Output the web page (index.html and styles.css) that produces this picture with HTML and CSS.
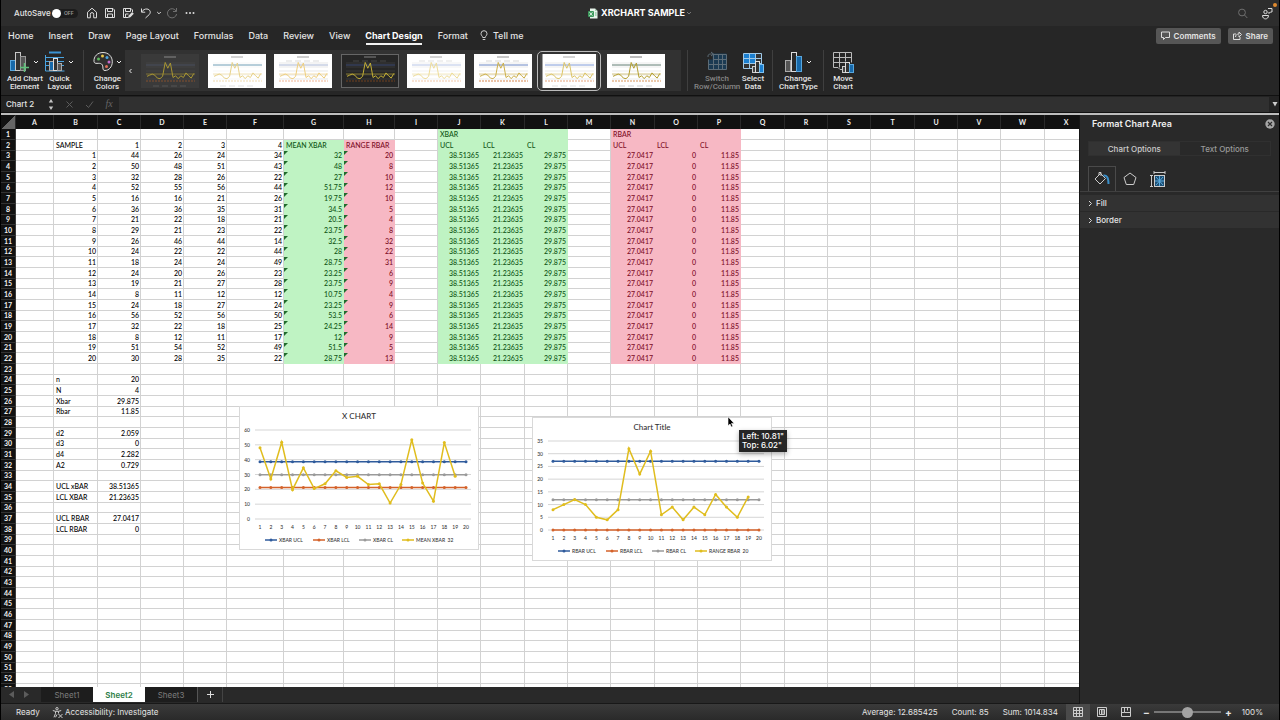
FILE: index.html
```html
<!DOCTYPE html>
<html lang="en">
<head>
<meta charset="utf-8">
<title>XRCHART SAMPLE</title>
<link rel="stylesheet" href="styles.css">
</head>
<body>
<div class="app">
  <header class="titlebar">
    <div class="quick">
      <label class="autosave">AutoSave
        <input type="checkbox" class="switch" role="switch" aria-label="AutoSave">
        <span class="off">OFF</span>
      </label>
      <button class="icon-btn" aria-label="Home"><svg width="12" height="12" viewBox="0 0 12 12"><path d="M1.5 5.2 6 1.2l4.500 4v5.600H7.700V7.300a1.700 1.700 0 0 0-3.400 0v3.500H1.500z"/></svg></button>
      <button class="icon-btn" aria-label="Save"><svg width="12" height="12" viewBox="0 0 12 12"><path d="M1.500 1.500h7.500l1.500 1.500v7.500h-9zM3.500 1.500v3h5v-3M3.500 10.500v-3.500h5v3.500"/></svg></button>
      <button class="icon-btn" aria-label="Save as"><svg width="12" height="12" viewBox="0 0 12 12"><path d="M6 10.500H1.500v-9H9l1.500 1.500v2M3.500 1.500v3h5v-3M3.500 10.500v-3.500h3"/><path d="m6 11 .7-2.500 3.400-3.400 1.700 1.700-3.400 3.400z" class="solid"/></svg></button>
      <button class="icon-btn" aria-label="Undo"><svg width="12" height="12" viewBox="0 0 12 12"><path d="M1.500 1.500v3.700h3.700M1.700 5C3 2.800 5 1.800 7 2c3 .3 4.300 3.300 2.300 5.500L5.500 11"/></svg></button>
      <button class="icon-btn tiny" aria-label="Undo options"><svg width="6" height="6" viewBox="0 0 6 6"><path d="m1.200 2 1.800 1.800L4.800 2"/></svg></button>
      <button class="icon-btn dim" aria-label="Redo" disabled><svg width="12" height="12" viewBox="0 0 12 12"><path d="M10.500 1v3.500H7M10.200 4.300A4.600 4.600 0 1 0 10.600 7"/></svg></button>
      <button class="icon-btn" aria-label="More"><svg width="12" height="12" viewBox="0 0 12 12"><g class="solid"><circle cx="2.500" cy="6" r="1"/><circle cx="6" cy="6" r="1"/><circle cx="9.500" cy="6" r="1"/></g></svg></button>
    </div>
    <h1 class="doc-title">
      <svg width="10" height="11" viewBox="0 0 10 11"><path d="M2 .5h5L9.500 3v7.500H2z" fill="#e9f5ec"/><path d="M7 .5V3h2.500z" fill="#a8cfb4"/><rect y="3" width="6" height="6" rx="1" fill="#3d9a5d"/><path d="m1.600 4.300 2.800 3.400M4.400 4.300 1.600 7.700" stroke="#fff" stroke-width=".8"/><path d="M7 5h1.600M7 7h1.600" stroke="#6bb585"/></svg>
      XRCHART SAMPLE
      <svg class="title-arrow" width="6" height="6" viewBox="0 0 6 6"><path d="m1 2 2 2 2-2"/></svg>
    </h1>
    <div class="title-right">
      <button class="icon-btn dim" aria-label="Search"><svg width="12" height="12" viewBox="0 0 12 12"><circle cx="5" cy="5.500" r="3.400"/><path d="m7.500 8 2.800 3"/></svg></button>
      <button class="icon-btn" aria-label="Presence"><svg width="12" height="14" viewBox="0 0 12 14"><circle cx="4.500" cy="6" r="1.700"/><path d="M1.500 9.500h6c0 4.500-6 4.500-6 0zM7 2.500h4v3.500H9.500L8 7.500V6"/></svg></button>
      <span class="mic-dot"></span>
    </div>
  </header>

  <nav class="tabs">
    <button>Home</button><button>Insert</button><button>Draw</button><button>Page Layout</button><button>Formulas</button><button>Data</button><button>Review</button><button>View</button><button class="active">Chart Design</button><button>Format</button>
    <button class="tell"><svg width="8" height="11" viewBox="0 0 8 11"><path d="M2.700 7.500C2.700 6 1 5.700 1 3.700a3 3 0 0 1 6 0c0 2-1.700 2.300-1.700 3.800zM2.700 9.500h2.600"/></svg>Tell me</button>
    <span class="grow"></span>
    <button class="pill"><svg width="9" height="9" viewBox="0 0 9 9"><path d="M.5 1h8v5.500h-4l-2 2v-2h-2z"/></svg>Comments</button>
    <button class="pill"><svg width="9" height="9" viewBox="0 0 9 9"><path d="M3 3H.5v5.500h6.500V6M2.500 6C2.500 4 4 3 6 3V1l2.500 2.500L6 6V4.300"/></svg>Share</button>
  </nav>

  <div class="ribbon">
    <button class="tool"><span class="tool-icon"><svg width="20" height="22" viewBox="0 0 20 22"><rect x=".5" y="9.500" width="5" height="10" fill="#1769aa" stroke="#58a6dd"/><rect x="5.500" y="1.500" width="5" height="18" fill="#333" stroke="#c8c8c8"/><rect x="10.500" y="5.500" width="5" height="14" fill="#555" stroke="#999"/><path d="M14.500 12v9M10 16.500h9" stroke="#5fc07a" stroke-width="1.500"/></svg><svg class="caret" width="6" height="6" viewBox="0 0 6 6"><path d="m1 2 2 2 2-2"/></svg></span>Add Chart<br>Element</button>
    <button class="tool"><span class="tool-icon"><svg width="20" height="22" viewBox="0 0 20 22"><path d="M4 1.500h12" stroke="#3a94d4" stroke-width="2"/><path d="M.5 4v16h19M1 6.500h18M1 10.500h18M1 14.500h18" fill="none" stroke="#4aa3df"/><rect x="4.500" y="10.500" width="4" height="9" fill="#1769aa" stroke="#aaa"/><rect x="8.500" y="7.500" width="4" height="12" fill="#333" stroke="#ddd"/><rect x="12.500" y="12.500" width="4" height="7" fill="#555" stroke="#aaa"/></svg><svg class="caret" width="6" height="6" viewBox="0 0 6 6"><path d="m1 2 2 2 2-2"/></svg></span>Quick<br>Layout</button>
    <span class="sep"></span>
    <button class="tool"><span class="tool-icon"><svg width="20" height="22" viewBox="0 0 20 22"><path d="M10 1.500c5.500 0 9.300 4 9.300 9.300 0 5-3.300 8.700-7.300 8.700-3.600 0-.8-4.500-3.500-6.500-2.500-1.800-7 1-7.500-2.500C.5 5.500 4.500 1.500 10 1.500z" fill="#303030" stroke="#ddd"/><circle cx="5.500" cy="8" r="1.500" fill="#5cb85c"/><circle cx="9.500" cy="5" r="1.500" fill="#e8c648"/><circle cx="14" cy="6.500" r="1.500" fill="#4aa3df"/><circle cx="16" cy="11" r="1.500" fill="#c76bd1"/><circle cx="13.500" cy="15.500" r="1.500" fill="#e0705a"/></svg><svg class="caret" width="6" height="6" viewBox="0 0 6 6"><path d="m1 2 2 2 2-2"/></svg></span>Change<br>Colors</button>
    <div class="gallery">
      <button class="gallery-prev" aria-label="Previous styles"><svg width="5" height="8" viewBox="0 0 5 8"><path d="M3.500 2 1.500 4l2 2"/></svg></button>
      <div class="thumbs" id="thumbs"></div>
    </div>
    <span class="sep"></span>
    <button class="tool wide" disabled><span class="tool-icon"><svg width="20" height="22" viewBox="0 0 20 22"><path d="M5.500 2.500v6h-4v10h18v-16h-11z" fill="#1b3a52"/><path d="M6.500 3.500h13v15h-18v-10M1.500 13.500h18M6.500 8.500h13M6.500 3v15M11.500 3.500v15M15.500 3.500v15M1 6c0-3 1-3 5-3M4 1l2.500 2L4 5" fill="none" stroke="#5d6d78"/></svg></span>Switch<br>Row/Column</button>
    <button class="tool narrow"><span class="tool-icon"><svg width="22" height="22" viewBox="0 0 22 22"><rect x="1.500" y="2.500" width="18" height="15" fill="#333"/><rect x="1.500" y="2.500" width="12" height="10" fill="#1b7fd0"/><path d="M1.500 2.500h18v15h-18zM1.500 7.500h18M1.500 12.500h18M7.500 2.500v15M13.500 2.500v15" fill="none" stroke="#9fc9e8"/><rect x="10.500" y="15.500" width="4" height="6" fill="#444" stroke="#ccc"/><rect x="13.500" y="10.500" width="4" height="11" fill="#333" stroke="#ddd"/><rect x="17.500" y="13.500" width="4" height="8" fill="#1b7fd0" stroke="#7fc0ee"/></svg></span>Select<br>Data</button>
    <span class="sep"></span>
    <button class="tool medium"><span class="tool-icon"><svg width="18" height="22" viewBox="0 0 18 22"><rect x=".5" y="9.500" width="5" height="11" fill="#555" stroke="#aaa"/><rect x="6.500" y="1.500" width="5" height="19" fill="#2a2a2a" stroke="#ddd"/><rect x="11.500" y="5.500" width="5" height="15" fill="#1769aa" stroke="#58a6dd"/></svg><svg class="caret" width="6" height="6" viewBox="0 0 6 6"><path d="m1 2 2 2 2-2"/></svg></span>Change<br>Chart Type</button>
    <span class="sep"></span>
    <button class="tool narrow"><span class="tool-icon"><svg width="22" height="22" viewBox="0 0 22 22"><path d="M10 18.500H8l-2 -2H1.500v-15h18v10M1.500 6.500h18M1.500 11.500h12M7.500 1.500v15M13.500 1.500v9" fill="none" stroke="#bbb"/><rect x="10.500" y="15.500" width="4" height="6" fill="#444" stroke="#ccc"/><rect x="13.500" y="11.500" width="4" height="10" fill="#333" stroke="#ddd"/><rect x="17.500" y="13.500" width="4" height="8" fill="#1769aa" stroke="#58a6dd"/></svg></span>Move<br>Chart</button>
  </div>

  <div class="formula-bar">
    <input class="name-box" value="Chart 2" aria-label="Name box">
    <span class="stepper"><svg width="6" height="13" viewBox="0 0 6 13"><path d="M3 1 5.200 4.500H.8zM3 12 .8 8.500h4.400z"/></svg></span>
    <button class="fx-btn" aria-label="Cancel" disabled><svg width="9" height="9" viewBox="0 0 9 9"><path d="m1.500 1.500 6 6M7.500 1.500l-6 6"/></svg></button>
    <button class="fx-btn" aria-label="Enter" disabled><svg width="9" height="9" viewBox="0 0 9 9"><path d="m1 5 2.500 2.500L8 1.500"/></svg></button>
    <button class="fx-btn fx" disabled>fx</button>
    <input class="formula" aria-label="Formula">
    <span class="expand"><svg width="6" height="6" viewBox="0 0 6 6"><path d="M.5 1h5L3 5.500z"/></svg></span>
  </div>

  <main class="work">
    <section class="book">
      <div class="sheet">
        <table class="grid" id="grid"></table>
        <div class="chart chart-x" id="chart-x"></div>
        <div class="chart chart-r" id="chart-r"></div>
        <svg class="pointer" width="8" height="12" viewBox="0 0 8 12"><path d="M1 .8v9l2-1.800 1.300 3 1.500-.7-1.300-2.900h2.700z" fill="#000" stroke="#fff" stroke-width=".6"/></svg>
        <div class="drag-tip">Left: 10.81"<br>Top: 6.02"</div>
      </div>
      <div class="sheet-tabs">
        <button class="arrow" aria-label="Previous sheet"><svg width="5" height="7" viewBox="0 0 5 7"><path d="M5 0v7L0 3.500z"/></svg></button>
        <button class="arrow" aria-label="Next sheet"><svg width="5" height="7" viewBox="0 0 5 7"><path d="M0 0v7l5-3.500z"/></svg></button>
        <button class="sheet-tab">Sheet1</button>
        <button class="sheet-tab active">Sheet2</button>
        <button class="sheet-tab">Sheet3</button>
        <button class="add" aria-label="Add sheet"><svg width="9" height="9" viewBox="0 0 9 9"><path d="M4.500 1v7M1 4.500h7"/></svg></button>
      </div>
    </section>

    <aside class="pane">
      <div class="pane-head"><h2>Format Chart Area</h2><button class="close" aria-label="Close"><svg width="10" height="10" viewBox="0 0 10 10"><circle cx="5" cy="5" r="4.700" fill="#a5a5a5"/><path d="m3 3 4 4M7 3 3 7" stroke="#2b2b2b" stroke-width="1.200"/></svg></button></div>
      <div class="segments"><button class="active">Chart Options</button><button>Text Options</button></div>
      <div class="pane-icons">
        <button class="active" aria-label="Fill and line"><svg width="18" height="18" viewBox="0 0 18 18"><path d="m7.500 3.500 5 5-5.500 5.500-5-5zM6 5V2.500h2V6" fill="none" stroke="#ccc"/><path d="M10.500 5.500c3-.5 5 1.500 5 8.500" fill="none" stroke="#3a8fc9" stroke-width="2"/></svg></button>
        <button aria-label="Effects"><svg width="18" height="18" viewBox="0 0 18 18"><path d="m9 3 6 4.500-2.300 7H5.300L3 7.500z" fill="none" stroke="#ccc"/></svg></button>
        <button aria-label="Size and properties"><svg width="18" height="18" viewBox="0 0 18 18"><path d="M5 2.500h11M5 1v3M16 1v3M2.500 5.500v11M1 5.500h3M1 16.500h3" stroke="#ccc"/><rect x="5.500" y="5.500" width="10" height="11" fill="#1d4f74" stroke="#ccc"/><path d="m7 7 7 8M14 7l-7 8M10.500 6v10M6 11h9" stroke="#5aa9dc"/></svg></button>
      </div>
      <button class="fold"><svg width="5" height="7" viewBox="0 0 5 7"><path d="m1 1 2.500 2.500L1 6"/></svg>Fill</button>
      <button class="fold"><svg width="5" height="7" viewBox="0 0 5 7"><path d="m1 1 2.500 2.500L1 6"/></svg>Border</button>
    </aside>
  </main>

  <footer class="status">
    <span class="ready">Ready</span>
    <button class="access"><svg width="11" height="11" viewBox="0 0 11 11"><circle cx="5" cy="1.700" r="1.200"/><path d="M.8 3.500 3.500 4.300v2.200L2 10.300M9.200 3.500l-2.700.8v2.200M3.500 4.300h3M3.500 10.300 5 7.500M6.500 7l4 4M10.500 7l-4 4"/></svg>Accessibility: Investigate</button>
    <span class="grow"></span>
    <span class="stat">Average: 12.685425</span><span class="stat">Count: 85</span><span class="stat">Sum: 1014.834</span>
    <button class="view active" aria-label="Normal view"><svg width="10" height="10" viewBox="0 0 10 10"><path d="M.5.500h9v9h-9zM.5 3.500h9M.5 6.500h9M3.500.500v9M6.500.500v9"/></svg></button>
    <button class="view" aria-label="Page layout view"><svg width="10" height="10" viewBox="0 0 10 10"><path d="M.5.500h9v9h-9zM2.500 2.500h5v5h-5zM4.500 3v4M6 3v4"/></svg></button>
    <button class="view" aria-label="Page break view"><svg width="10" height="10" viewBox="0 0 10 10"><path d="M.5.500h9v9h-9zM3.500.500v5h6M6.500.500v3M.5 5.500h3"/></svg></button>
    <div class="zoom"><button aria-label="Zoom out">−</button><input type="range" min="0" max="100" value="50" aria-label="Zoom"><button aria-label="Zoom in">+</button></div>
    <span class="percent">100%</span>
  </footer>
</div>
<script src="sheet.js"></script>
</body>
</html>
```
FILE: styles.css
```css
* { box-sizing: border-box; }
body { margin: 0; background: #000; color: #e4e4e4; font: 8px/10px Inter, "Liberation Sans", sans-serif; }
button, input { font: inherit; color: inherit; background: none; border: 0; padding: 0; margin: 0; outline: 0; }
svg { display: block; flex: none; }
.grow { flex: 1; }
.app { display: flex; flex-direction: column; height: 100vh; border-right: 1px solid #000; border-left: 1px solid #000; background: #262626; }

.titlebar { display: grid; grid-template-columns: 1fr auto 1fr; align-items: center; height: 26px; background: #2d2d2d; }
.quick { display: flex; align-items: center; gap: 6px; padding-left: 13px; }
.autosave { display: flex; align-items: center; gap: 1px; margin-right: 2px; position: relative; font-weight: 500; }
.switch { appearance: none; width: 26px; height: 9px; border-radius: 5px; background: #1c1c1c; }
.switch::before { content: ""; display: block; width: 9px; height: 9px; border-radius: 50%; background: #fff; }
.off { position: absolute; right: 4px; font-size: 5px; font-weight: 600; color: #999; }
.icon-btn { display: flex; stroke: #dcdcdc; fill: none; }
.icon-btn.tiny { margin: 0 -2px; stroke-width: 1; }
.icon-btn.dim { stroke: #6f6f6f; }
.solid { fill: #dcdcdc; stroke: none; }
.doc-title { display: flex; align-items: center; gap: 3px; margin: 0; font-size: 9px; font-weight: 700; line-height: 12px; color: #fff; }
.title-arrow { fill: none; stroke: #777; margin-left: -2px; }
.title-right { display: flex; justify-content: flex-end; align-items: center; gap: 12px; padding-right: 6px; position: relative; }
.mic-dot { position: absolute; top: -3px; right: 2px; width: 4px; height: 4px; border-radius: 50%; background: #e08a2e; }

.tabs { display: flex; align-items: center; gap: 15px; height: 19px; padding: 0 6px 0 7px; margin-bottom: 1px; font-size: 9px; font-weight: 500; line-height: 12px; white-space: nowrap; }
.tabs > .active { font-weight: 700; color: #fff; box-shadow: 0 3px 0 -1px #f0f0f0; height: 15px; }
.tell { display: flex; align-items: center; gap: 5px; margin-left: -3px; }
.tell svg { fill: none; stroke: #ccc; }
.pill { display: flex; align-items: center; gap: 4px; height: 16px; padding: 0 5px; border-radius: 2px; background: #565656; font-size: 8px; font-weight: 600; }
.pill + .pill { margin-left: -8px; }
.pill svg { fill: none; stroke: #ddd; }

.ribbon { display: flex; align-items: stretch; height: 50px; padding: 4px 0 4px 6px; border-bottom: 1px solid #111; font: 8px/8px Roboto, "Liberation Sans", sans-serif; }
.tool { width: 35px; flex: none; font-weight: 500; white-space: nowrap; text-align: center; }
.tool.wide { width: 46px; }
.tool.medium { width: 38px; }
.tool.narrow { width: 26px; }
.tool:disabled { color: #858585; }
.tool-icon { display: flex; justify-content: center; align-items: center; gap: 3px; height: 22px; margin-bottom: 2px; }
.caret { fill: none; stroke: #eee; }
.sep { width: 1px; margin: 0 6px; background: #3f3f3f; flex: none; }
.gallery { display: flex; flex: 0 1 556px; background: #323232; }
.gallery-prev { width: 16px; padding-left: 3px; }
.gallery-prev svg { fill: none; stroke: #eee; }
.thumbs { flex: 1; display: flex; justify-content: space-between; align-items: center; padding-right: 16px; }
.thumb { width: 58px; height: 34px; position: relative; }
.thumb.selected { outline: 1px solid #bbb; outline-offset: 2px; border-radius: 2px; }

.formula-bar { display: flex; align-items: center; height: 17px; background: #232323; border-bottom: 1px solid #111; }
.name-box { width: 47px; padding-left: 5px; font-weight: 500; }
.stepper { width: 11px; fill: #c5c5c5; }
.fx-btn { display: flex; justify-content: center; width: 20px; fill: none; stroke: #5c5c5c; color: #666; }
.fx { font: italic 10px/12px "Liberation Serif", serif; stroke: none; }
.formula { flex: 1; height: 15px; background: #303030; }
.expand { padding: 0 1px 0 3px; fill: #ccc; }

.work { flex: 1; min-height: 0; display: flex; border-top: 2px solid #bdbdbd; }
.book { flex: 1; min-width: 0; display: flex; flex-direction: column; }
.sheet { position: relative; flex: 1; min-height: 0; overflow: hidden; background: #fff; color: #000; }
.grid { table-layout: fixed; border-collapse: separate; border-spacing: 0; width: 1087px; font: 7px/9px Lato, "Liberation Sans", sans-serif; }
.grid th { padding: 0; background: #111; color: #eee; font-weight: 700; border-right: 1px solid #3a3a3a; border-bottom: 1px solid #333; overflow: hidden; }
.grid thead th { border-bottom: 0; height: 14px; border-right-color: #2a2a2a; }
.grid td { position: relative; padding: 0 1px 0 2px; border-right: 1px solid #d2d2d2; border-bottom: 1px solid #d2d2d2; text-align: right; white-space: nowrap; font-weight: 500; }
.grid tbody tr { height: 11px; }
.grid tbody tr:nth-child(3n) { height: 10px; }
.grid .text { text-align: left; }
.grid .green { background: #bff3c3; border-color: #bff3c3; color: #0e5514; }
.grid .pink { background: #f7b8c4; border-color: #f7b8c4; color: #7c0c24; }
.grid .flag::before { content: ""; position: absolute; top: 0; left: 0; border: 2px solid transparent; border-top-color: #206a2c; border-left-color: #206a2c; }
.corner { background: linear-gradient(135deg, #111 50%, #666 50%); }
.grid .corner { background: linear-gradient(135deg, #111 50%, #666 50%); }

.chart { position: absolute; width: 240px; height: 144px; background: #fff; border: 1px solid #d9d9d9; font-family: Lato, "Liberation Sans", sans-serif; }
.chart-x { left: 238px; top: 291px; }
.chart-r { left: 531px; top: 302px; }
.chart text { font-size: 5px; fill: #333; font-weight: 500; }
.chart .title { font-size: 8px; }
.mid { text-anchor: middle; }
.end { text-anchor: end; }
.pointer { position: absolute; left: 726px; top: 301px; }
.drag-tip { position: absolute; left: 738px; top: 315px; padding: 2px 3px; background: #262626; color: #fff; font-weight: 500; line-height: 9px; box-shadow: 0 2px 5px #0005; }

.sheet-tabs { display: flex; height: 17px; padding: 0 0 1px 2px; background: #292929; border-bottom: 1px solid #181818; }
.arrow { width: 15px; display: flex; align-items: center; justify-content: center; fill: #5c5c5c; padding-left: 2px; }
.sheet-tab { width: 52px; background: #1d1d1d; color: #7c7c7c; font-size: 8px; }
.arrow + .sheet-tab { margin-left: 8px; }
.sheet-tab.active { background: #fff; color: #2c7d46; font-weight: 600; }
.add { display: flex; align-items: center; justify-content: center; width: 26px; border-left: 1px solid #555; border-right: 1px solid #444; stroke: #ddd; }

.pane { width: 200px; flex: none; background: #292929; border-left: 1px solid #151515; }
.pane-head { display: flex; justify-content: space-between; align-items: center; padding: 4px 4px 4px 12px; }
.pane-head h2 { margin: 0; font-size: 9px; line-height: 10px; font-weight: 600; color: #eee; }
.segments { display: flex; margin: 8px 8px 0; border: 1px solid #303030; }
.segments button { flex: 1; height: 13px; color: #999; font-weight: 500; }
.segments .active { background: #343434; color: #ccc; }
.pane-icons { display: flex; margin-top: 10px; padding: 0 8px; border-bottom: 1px solid #404040; }
.pane-icons button { width: 28px; height: 25px; display: flex; align-items: center; justify-content: center; }
.pane-icons .active { border: 1px solid #4a4a4a; border-bottom: 0; }
.fold { display: flex; align-items: center; gap: 3px; width: 100%; height: 16px; margin-top: 1px; padding-left: 8px; background: #323232; font-weight: 500; }
.pane-icons + .fold { margin-top: 3px; }
.fold svg { fill: none; stroke: #ddd; }

.status { display: flex; align-items: center; height: 16px; padding: 0 16px 0 15px; background: linear-gradient(#3a3a3a, #2a2a2a); white-space: nowrap; }
.ready { width: 36px; }
.access { display: flex; align-items: center; gap: 2px; }
.access svg { fill: none; stroke: #ccc; }
.stat { margin-right: 14px; }
.stat + .stat + .stat { margin-right: 8px; }
.view { display: flex; align-items: center; justify-content: center; width: 24px; height: 16px; fill: none; stroke: #ccc; }
.view.active { background: #4a4a4a; }
.zoom { display: flex; align-items: center; gap: 4px; margin-left: 5px; }
.zoom button { font-size: 10px; font-weight: 700; width: 7px; }
.zoom input { appearance: none; width: 67px; height: 2px; background: #777; }
.zoom input::-webkit-slider-thumb { appearance: none; width: 11px; height: 11px; border-radius: 50%; background: #a3a3a3; }
.percent { margin-left: 10px; }
```
FILE: sheet.js
```js
const widths = [38, 44, 43, 43, 43, 57, 60, 51, 43, 43, 44, 43, 43, 44, 43, 43, 44, 43, 43, 44, 43, 43, 44, 43];
const letters = "ABCDEFGHIJKLMNOPQRSTUVWX".split("");

const samples = [
  [44, 26, 24, 34, 32, 20], [50, 48, 51, 43, 48, 8], [32, 28, 26, 22, 27, 10], [52, 55, 56, 44, 51.75, 12],
  [16, 16, 21, 26, 19.75, 10], [36, 36, 35, 31, 34.5, 5], [21, 22, 18, 21, 20.5, 4], [29, 21, 23, 22, 23.75, 8],
  [26, 46, 44, 14, 32.5, 32], [24, 22, 22, 44, 28, 22], [18, 24, 24, 49, 28.75, 31], [24, 20, 26, 23, 23.25, 6],
  [19, 21, 27, 28, 23.75, 9], [8, 11, 12, 12, 10.75, 4], [24, 18, 27, 24, 23.25, 9], [56, 52, 56, 50, 53.5, 6],
  [32, 22, 18, 25, 24.25, 14], [8, 12, 11, 17, 12, 9], [51, 54, 52, 49, 51.5, 5], [30, 28, 35, 22, 28.75, 13]
];

const cells = { J1: "XBAR", N1: "RBAR", B2: "SAMPLE", C2: 1, D2: 2, E2: 3, F2: 4, G2: "MEAN XBAR", H2: "RANGE RBAR",
  J2: "UCL", K2: "LCL", L2: "CL", N2: "UCL", O2: "LCL", P2: "CL",
  B24: "n", C24: 20, B25: "N", C25: 4, B26: "Xbar", C26: 29.875, B27: "Rbar", C27: 11.85,
  B29: "d2", C29: 2.059, B30: "d3", C30: 0, B31: "d4", C31: 2.282, B32: "A2", C32: 0.729,
  B34: "UCL xBAR", C34: 38.51365, B35: "LCL XBAR", C35: 21.23635,
  B37: "UCL RBAR", C37: 27.0417, B38: "LCL RBAR", C38: 0 };

samples.forEach((row, i) => {
  const r = i + 3;
  cells["B" + r] = i + 1;
  row.forEach((v, c) => { cells["CDEFGH"[c] + r] = v; });
  Object.assign(cells, { ["J" + r]: 38.51365, ["K" + r]: 21.23635, ["L" + r]: 29.875, ["N" + r]: 27.0417, ["O" + r]: 0, ["P" + r]: 11.85 });
});

function cellClass(col, row, value) {
  const list = [];
  if (typeof value === "string") list.push("text");
  if (row <= 22) {
    if ("JKL".includes(col) || (col === "G" && row > 1)) list.push("green");
    if ("NOP".includes(col) || (col === "H" && row > 1)) list.push("pink");
    if ("GH".includes(col) && row > 2) list.push("flag");
  }
  return list.join(" ");
}

let html = '<colgroup><col style="width:15px">' + widths.map(w => `<col style="width:${w}px">`).join("") + "</colgroup>";
html += '<thead><tr><th class="corner"></th>' + letters.map(l => `<th>${l}</th>`).join("") + "</tr></thead><tbody>";
for (let r = 1; r <= 53; r++) {
  html += `<tr><th>${r}</th>` + letters.map(l => {
    const v = cells[l + r];
    return `<td class="${cellClass(l, r, v)}">${v === undefined ? "" : v}</td>`;
  }).join("") + "</tr>";
}
document.getElementById("grid").innerHTML = html + "</tbody>";

const COLORS = ["#2f5b9c", "#d4622a", "#9a9a9a", "#e0bd1e"];

function drawChart(id, title, max, step, lines, series, names) {
  const x = i => 20 + i * 206 / 19;
  const y = v => 112 - v * 89 / max;
  let s = `<svg width="100%" height="100%" viewBox="0 0 238 142"><text class="title mid" x="119" y="12">${title}</text>`;
  for (let v = 0; v <= max; v += step) {
    s += `<path d="M15 ${y(v)}H231" stroke="#d5d5d5"/><text class="end" x="10" y="${y(v) + 2}">${v}</text>`;
  }
  for (let i = 0; i < 20; i++) s += `<text class="mid" x="${x(i)}" y="122">${i + 1}</text>`;
  lines.map(v => Array(20).fill(v)).concat([series]).forEach((data, k) => {
    s += `<polyline fill="none" stroke="${COLORS[k]}" stroke-width="1.500" points="${data.map((v, i) => x(i) + "," + y(v)).join(" ")}"/>`;
    data.forEach((v, i) => { s += `<circle cx="${x(i)}" cy="${y(v)}" r="1.500" fill="${COLORS[k]}"/>`; });
  });
  [25, 73, 119, 162].forEach((lx, k) => {
    s += `<path d="M${lx} 133h12" stroke="${COLORS[k]}" stroke-width="1.500"/><circle cx="${lx + 6}" cy="133" r="1.500" fill="${COLORS[k]}"/><text x="${lx + 14}" y="135">${names[k]}</text>`;
  });
  document.getElementById(id).innerHTML = s + "</svg>";
}

const means = samples.slice(1).map(r => r[4]);
const ranges = samples.slice(1).map(r => r[5]);
drawChart("chart-x", "X CHART", 60, 10, [38.51365, 21.23635, 29.875], means, ["XBAR UCL", "XBAR LCL", "XBAR CL", "MEAN XBAR&#160; 32"]);
drawChart("chart-r", "Chart Title", 35, 5, [27.0417, 0, 11.85], ranges, ["RBAR UCL", "RBAR LCL", "RBAR CL", "RANGE RBAR&#160; 20"]);

/* Chart style previews: background, series, upper line, lower line, grid, title */
const styles = [
  ["#3a3a3a", "#a89632", "#4a5160", "#84502e", "#4c4c4c", "#aaa"],
  ["#ffffff", "#e8d28a", "#6f9db5", "#efd9ae", "#f2f2f2", "#888"],
  ["#ffffff", "#efcf7e", "#a9b6d4", "#efb492", "#d8d8d8", "#777"],
  ["#262626", "#c2ae35", "#3c4a75", "#70411f", "#484848", "#aaa"],
  ["#ffffff", "#eedd9a", "#b7c5e6", "#f2c7a8", "#e8e8e8", "#888"],
  ["#ffffff", "#cdb04a", "#6a86c4", "#d88850", "#dddddd", "#666"],
  ["#ffffff", "#dcc568", "#7f9ad8", "#e6a37c", "#dddddd", "#888"],
  ["#ffffff", "#b5a032", "#5f7a70", "#d89458", "#dddddd", "#444"]
];
document.getElementById("thumbs").innerHTML = styles.map(([bg, line, top, low, grid, ink], n) => {
  const pts = ranges.map((v, i) => `${6 + i * 2.6},${27 - v * 0.58}`).join(" ");
  const rules = [9, 13, 17, 21, 25].map(v => `<path d="M5 ${v}H54" stroke="${grid}" stroke-width=".6"/>`).join("");
  const legendY = n === 1 || n > 5 || n === 0 ? 32 : 7;
  return `<button class="thumb${n === 6 ? " selected" : ""}" aria-label="Style ${n + 1}"><svg width="58" height="34" viewBox="0 0 58 34">
    <rect width="58" height="34" fill="${bg}"/>${n === 6 ? '<path d="M1 0v34M57.500 0v34" stroke="#444" stroke-width="3"/>' : ""}
    ${n === 3 ? '<rect x=".5" y=".5" width="57" height="33" fill="none" stroke="#666"/>' : ""}
    <path d="M23 3h12" stroke="${ink}" stroke-width="1" opacity=".7"/>${rules}
    <path d="M12 ${legendY}h34" stroke="${ink}" stroke-width=".5" stroke-dasharray="6 3" opacity=".5"/>
    <path d="M5 11H54" stroke="${top}" stroke-width="1"/><path d="M5 20H54" stroke="${line}" stroke-width=".6"/>
    <path d="M5 27H54" stroke="${low}" stroke-width="1.200" stroke-dasharray="2 1"/>
    <polyline points="${pts}" fill="none" stroke="${line}" stroke-width="1"/></svg></button>`;
}).join("");
```
